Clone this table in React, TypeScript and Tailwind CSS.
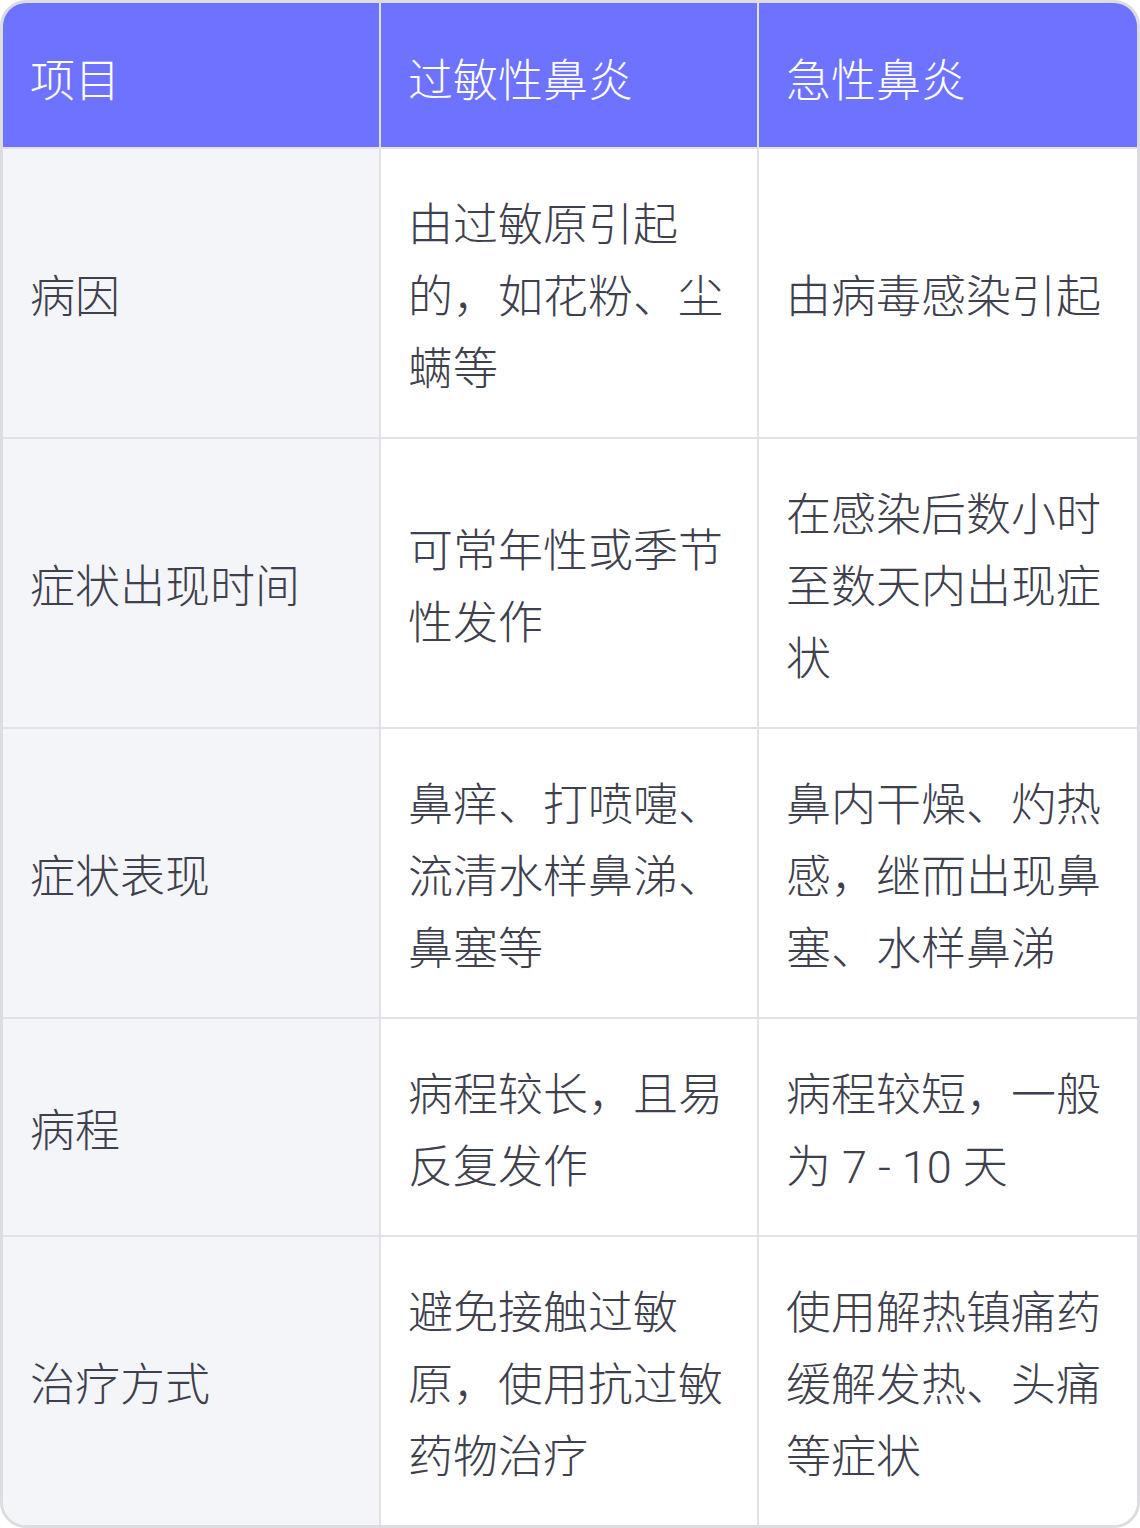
const rows: [string, string, string][] = [
  ['病因', '由过敏原引起的，如花粉、尘螨等', '由病毒感染引起'],
  ['症状出现时间', '可常年性或季节性发作', '在感染后数小时至数天内出现症状'],
  ['症状表现', '鼻痒、打喷嚏、流清水样鼻涕、鼻塞等', '鼻内干燥、灼热感，继而出现鼻塞、水样鼻涕'],
  ['病程', '病程较长，且易反复发作', '病程较短，一般为 7 - 10 天'],
  ['治疗方式', '避免接触过敏原，使用抗过敏药物治疗', '使用解热镇痛药缓解发热、头痛等症状'],
];

const headers = ['项目', '过敏性鼻炎', '急性鼻炎'];

export default function App() {
  return (
    <div
      className="w-[1140px] h-[1528px] bg-white"
      style={{ fontFamily: 'Roboto, "Noto Sans CJK SC", sans-serif' }}
    >
      <div className="h-full overflow-hidden rounded-[26px] border-[3px] border-[#dcdce1] bg-white">
        <div className="grid grid-cols-3 bg-[#6e73ff] border-b-2 border-[#e1e1e6]">
          {headers.map((h, i) => (
            <div
              key={h}
              className={`pl-[27px] pr-7 pt-[43px] pb-[29px] text-[45px] leading-[72px] font-light text-white ${
                i < 2 ? 'border-r-2 border-[#e1e1e6]' : ''
              }`}
            >
              {h}
            </div>
          ))}
        </div>
        {rows.map((row, r) => (
          <div
            key={row[0]}
            className={`grid grid-cols-3 ${r < rows.length - 1 ? 'border-b-2 border-[#e1e1e6]' : ''}`}
          >
            {row.map((cell, c) => (
              <div
                key={c}
                className={`flex items-center pl-[27px] pr-7 pt-[41px] pb-[31px] text-[45px] leading-[72px] font-light text-[#3e404d] ${
                  c === 0 ? 'bg-[#f4f5f9]' : 'bg-white'
                } ${c < 2 ? 'border-r-2 border-[#e1e1e6]' : ''}`}
              >
                <span>{cell}</span>
              </div>
            ))}
          </div>
        ))}
      </div>
    </div>
  );
}
